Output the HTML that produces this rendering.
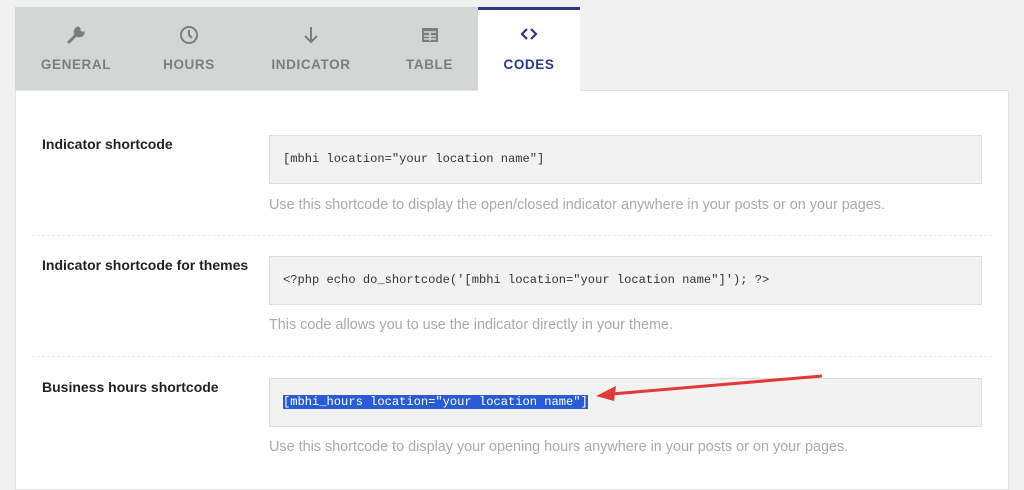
<!DOCTYPE html>
<html><head><style>
body{margin:0;width:1024px;height:475px;background:#f1f1f1;font-family:"Liberation Sans",sans-serif;position:relative;overflow:hidden}
.tabs{position:absolute;left:15px;top:7px;width:463px;height:83px;background:#d3d6d5}
.tab{position:absolute;top:7px;height:83px;text-align:center;color:#7d7d7d;font-weight:bold;font-size:13.5px;letter-spacing:.6px}
.tab svg{position:absolute;top:18px;left:50%;margin-left:-10px}
.tab span{position:absolute;top:50px;left:0;right:0}
.active{position:absolute;left:478px;top:7px;width:102px;height:84px;background:#fff;border-top:3px solid #2b3a86;box-sizing:border-box;color:#2b3a86}
.panel{position:absolute;left:15px;top:90px;width:994px;height:400px;background:#fff;border:1px solid #e2e2e2;box-sizing:border-box}
.lbl{position:absolute;left:42px;font-size:14px;font-weight:bold;color:#222}
.code{position:absolute;left:269px;width:713px;height:49px;background:#f2f2f2;border:1px solid #ddd;box-sizing:border-box;font-family:"Liberation Mono",monospace;font-size:12.1px;color:#333;padding:16px 0 0 13px}
.help{position:absolute;left:269px;font-size:14.4px;color:#aaa}
.sep{position:absolute;left:32px;width:960px;border-top:1px dashed #e8e8e8}
.sel{background:#2a5bd6;color:#fff}
</style></head><body>
<div class="tabs"></div>
<div class="tab" style="left:15px;width:122px"><svg width="20" height="20" viewBox="0 0 20 20"><path d="M3 17 L10 10 M12 3 a4 4 0 1 0 5 5 l-2 0 -2 -2 0 -2 z" stroke="#7d7d7d" stroke-width="3" fill="#7d7d7d" stroke-linecap="round"/></svg><span>GENERAL</span></div>
<div class="tab" style="left:137px;width:104px"><svg width="20" height="20" viewBox="0 0 20 20"><circle cx="10" cy="10" r="8" stroke="#7d7d7d" stroke-width="2" fill="none"/><path d="M10 5v5l3 3" stroke="#7d7d7d" stroke-width="2" fill="none"/></svg><span>HOURS</span></div>
<div class="tab" style="left:241px;width:140px"><svg width="20" height="20" viewBox="0 0 20 20"><path d="M10 2v15M4 11l6 6 6-6" stroke="#7d7d7d" stroke-width="2" fill="none"/></svg><span>INDICATOR</span></div>
<div class="tab" style="left:381px;width:97px"><svg width="20" height="20" viewBox="0 0 20 20"><rect x="2" y="3" width="16" height="14" fill="#7d7d7d"/><path d="M4 7h12M4 11h12M4 14h12M10 7v9" stroke="#d3d6d5" stroke-width="1.5"/></svg><span>TABLE</span></div>
<div class="panel"></div>
<div class="active tab"><svg width="20" height="20" viewBox="0 0 20 20" style="top:14px"><path d="M8 5l-5 5 5 5M12 5l5 5-5 5" stroke="#2b3a86" stroke-width="2.2" fill="none"/></svg><span style="top:47px">CODES</span></div>
<div class="lbl" style="top:136px">Indicator shortcode</div>
<div class="code" style="top:135px">[mbhi location="your location name"]</div>
<div class="help" style="top:197px">Use this shortcode to display the open/closed indicator anywhere in your posts or on your pages.</div>
<div class="sep" style="top:235px"></div>
<div class="lbl" style="top:257px">Indicator shortcode for themes</div>
<div class="code" style="top:256px">&lt;?php echo do_shortcode('[mbhi location="your location name"]'); ?&gt;</div>
<div class="help" style="top:317px">This code allows you to use the indicator directly in your theme.</div>
<div class="sep" style="top:356px"></div>
<div class="lbl" style="top:379px">Business hours shortcode</div>
<div class="code" style="top:378px"><span class="sel">[mbhi_hours location="your location name"]</span></div>
<div class="help" style="top:439px">Use this shortcode to display your opening hours anywhere in your posts or on your pages.</div>
<svg style="position:absolute;left:0;top:0" width="1024" height="475"><line x1="822" y1="376" x2="612" y2="394" stroke="#e03a3a" stroke-width="3"/><path d="M596 396 L616 386 L614 401 Z" fill="#e03a3a"/></svg>
</body></html>
